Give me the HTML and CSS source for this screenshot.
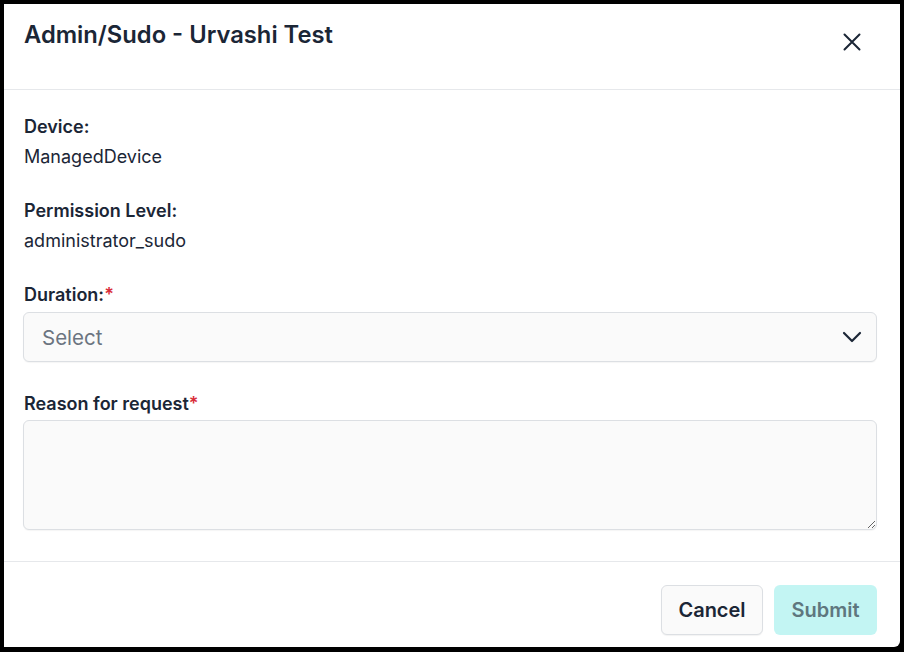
FILE: index.html
```html
<!DOCTYPE html>
<html lang="en">
<head>
<meta charset="utf-8">
<title>Admin/Sudo - Urvashi Test</title>
<link rel="stylesheet" href="styles.css">
</head>
<body>
<div class="dialog">
  <header class="dlg-head">
    <h1 class="dlg-title">Admin/Sudo - Urvashi Test</h1>
    <button class="close-btn" aria-label="Close">
      <svg width="20" height="20" viewBox="0 0 20 20" fill="none" stroke="#1b2636" stroke-width="2" stroke-linecap="round"><path d="M2.5 2.5 L17.5 17.5 M17.5 2.5 L2.5 17.5"/></svg>
    </button>
  </header>
  <main class="dlg-body">
    <div class="field">
      <div class="label">Device:</div>
      <div class="value">ManagedDevice</div>
    </div>
    <div class="field">
      <div class="label">Permission Level:</div>
      <div class="value">administrator_sudo</div>
    </div>
    <div class="field field-wide">
      <div class="label label-input">Duration:<span class="req">*</span></div>
      <div class="select">
        <span class="placeholder">Select</span>
        <svg width="20" height="12" viewBox="0 0 20 12" fill="none" stroke="#1b2636" stroke-width="2.2" stroke-linecap="round" stroke-linejoin="round"><path d="M2 2 L10 10 L18 2"/></svg>
      </div>
    </div>
    <div class="field">
      <div class="label">Reason for request<span class="req">*</span></div>
      <textarea class="textarea"></textarea>
    </div>
  </main>
  <footer class="dlg-foot">
    <button class="btn btn-cancel">Cancel</button>
    <button class="btn btn-submit">Submit</button>
  </footer>
</div>
</body>
</html>
```

FILE: styles.css
```css
html, body {
  margin: 0;
  padding: 0;
  background: #000;
  height: 100%;
}
body {
  padding: 4px 4px 5px 4px;
  box-sizing: border-box;
  font-family: Inter, "Noto Sans", sans-serif;
  color: #1b2636;
}
.dialog {
  background: #fff;
  height: 643px;
  border-radius: 0 0 6px 0;
  display: flex;
  flex-direction: column;
}
.dlg-head {
  height: 86px;
  border-bottom: 1px solid #e6e8eb;
  display: flex;
  align-items: flex-start;
  justify-content: space-between;
  padding: 0 38px 0 20px;
  box-sizing: border-box;
}
.dlg-title {
  margin: 15px 0 0 0;
  font-size: 23.75px;
  font-weight: 600;
  line-height: 32px;
  color: #1b2636;
}
.close-btn {
  margin-top: 28px;
  background: none;
  border: 0;
  padding: 0;
  width: 20px;
  height: 20px;
  display: flex;
}
.dlg-body {
  flex: 1;
  padding: 23px 23px 0 19px;
  display: flex;
  flex-direction: column;
}
.field {
  margin-bottom: 27px;
}
.field-wide {
  margin-bottom: 28px;
}
.label {
  font-size: 18px;
  font-weight: 600;
  line-height: 27px;
  margin-bottom: 3px;
  padding-left: 1px;
}
.label-input {
  margin-bottom: 4px;
}
.req {
  color: #d92d3a;
}
.value {
  font-size: 18px;
  line-height: 27px;
  padding-left: 1px;
}
.select {
  height: 50px;
  box-sizing: border-box;
  border: 1px solid #dcdfe3;
  border-radius: 6px;
  background: #fafafa;
  display: flex;
  align-items: center;
  justify-content: space-between;
  padding: 0 14px 0 18px;
  box-shadow: 0 1px 1px rgba(0,0,0,0.04);
}
.placeholder {
  font-size: 20.5px;
  color: #6b7480;
}
.textarea {
  display: block;
  width: 100%;
  height: 110px;
  box-sizing: border-box;
  border: 1px solid #dcdfe3;
  border-radius: 6px;
  background: #fafafa;
  margin: 3px 0 0 0;
  font-family: inherit;
  font-size: 16px;
  box-shadow: 0 1px 1px rgba(0,0,0,0.04);
}
.dlg-foot {
  border-top: 1px solid #e6e8eb;
  height: 86px;
  box-sizing: border-box;
  display: flex;
  justify-content: flex-end;
  align-items: flex-start;
  gap: 11px;
  padding: 23px 23px 0 0;
}
.btn {
  height: 50px;
  border-radius: 6px;
  font-family: inherit;
  font-size: 20px;
  font-weight: 600;
  padding: 0 14px;
  box-sizing: border-box;
}
.btn-cancel {
  width: 102px;
  background: #fafafa;
  border: 1px solid #dcdfe3;
  color: #1b2636;
  box-shadow: 0 1px 1px rgba(0,0,0,0.05);
}
.btn-submit {
  width: 103px;
  background: #c3f5f3;
  border: 0;
  color: #5e777e;
}
```
